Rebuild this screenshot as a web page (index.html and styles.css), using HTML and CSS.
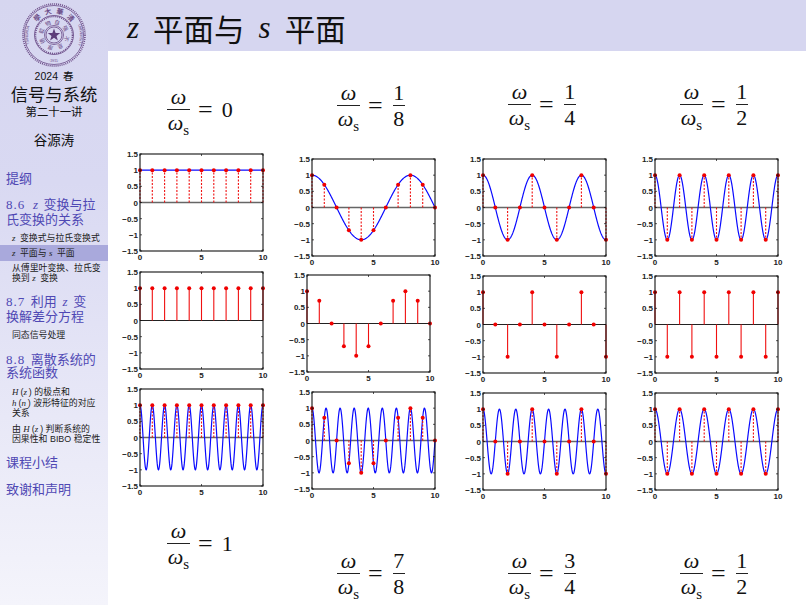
FILE: index.html
```html
<!DOCTYPE html>
<html lang="zh-CN">
<head>
  <meta charset="UTF-8" />
  <title>z 平面与 s 平面</title>
  <link rel="stylesheet" href="styles.css">
</head>
<body>
  <aside class="sidebar">
    <div class="brand">
      <svg class="logo" viewBox="0 0 64 64" width="64" height="64">
        <defs>
          <path id="ringTop" d="M10.5 32a21.5 21.5 0 0 1 43 0" />
          <path id="ringLeft" d="M13 53a28 28 0 0 1 0 -42" />
          <path id="ringRight" d="M51 11a28 28 0 0 1 0 42" />
          <path id="ringBottom" d="M20 56a27 27 0 0 0 24 0" />
          <path id="ringInner" d="M32 21a11 11 0 1 1 -0.01 0" />
        </defs>
        <circle class="logo-line dots" cx="32" cy="32" r="31" />
        <circle class="logo-line" cx="32" cy="32" r="29.5" />
        <circle class="logo-line" cx="32" cy="32" r="19.5" />
        <circle class="logo-line dots" cx="32" cy="32" r="18.5" />
        <circle class="logo-line" cx="32" cy="32" r="9.5" />
        <circle class="logo-line" cx="32" cy="32" r="8" />
        <text class="logo-big"><textPath href="#ringTop" startOffset="50%" text-anchor="middle" textLength="40">學大華清</textPath></text>
        <text class="logo-small"><textPath href="#ringLeft" startOffset="50%" text-anchor="middle" dominant-baseline="hanging">TSINGHUA</textPath></text>
        <text class="logo-small"><textPath href="#ringRight" startOffset="50%" text-anchor="middle" dominant-baseline="hanging">UNIVERSITY</textPath></text>
        <text class="logo-small"><textPath href="#ringBottom" startOffset="50%" text-anchor="middle">·1911·</textPath></text>
        <text class="logo-inner"><textPath href="#ringInner" textLength="66">自强不息厚德载物</textPath></text>
        <polygon class="logo-star" points="32,25.5 33.6,30 38.2,30 34.5,32.9 35.9,37.4 32,34.7 28.1,37.4 29.5,32.9 25.8,30 30.4,30" />
      </svg>
      <div class="term">2024 春</div>
      <div class="course">信号与系统</div>
      <div class="lecture">第二十一讲</div>
      <div class="teacher">谷源涛</div>
    </div>

    <nav class="nav">
      <a class="sec sec-outline">提纲</a>

      <a class="sec"><span class="no">8.6</span> <i>z</i> 变换与拉<br>氏变换的关系</a>
      <a class="sub sub-first"><i>z</i> 变换式与拉氏变换式</a>
      <a class="sub active"><i>z</i> 平面与 <i>s</i> 平面</a>
      <a class="sub">从傅里叶变换、拉氏变<br>换到 <i>z</i> 变换</a>

      <a class="sec sec-wide"><span class="no">8.7</span> 利用 <i>z</i> 变<br>换解差分方程</a>
      <a class="sub sub-first">同态信号处理</a>

      <a class="sec sec-tight"><span class="no">8.8</span> 离散系统的<br>系统函数</a>
      <a class="sub sub-top"><i>H</i>(<i>z</i>) 的极点和<br><i>h</i>(<i>n</i>) 波形特征的对应<br>关系</a>
      <a class="sub sub-gap">由 <i>H</i>(<i>z</i>) 判断系统的<br>因果性和 BIBO 稳定性</a>

      <a class="sec sec-end">课程小结</a>
      <a class="sec sec-end sec-last">致谢和声明</a>
    </nav>
  </aside>

  <main class="slide">
    <header class="title">
      <i>z</i><span>平面与</span><i>s</i><span>平面</span>
    </header>

    <div class="formulas formulas-top">
      <div class="formula shift-5">
        <div class="frac"><div class="num"><i>ω</i></div><div class="den"><i>ω</i><sub>s</sub></div></div>
        <span class="eq">=</span><span class="val">0</span>
      </div>
      <div class="formula shift-1">
        <div class="frac"><div class="num"><i>ω</i></div><div class="den"><i>ω</i><sub>s</sub></div></div>
        <span class="eq">=</span>
        <div class="frac frac-num"><div class="num">1</div><div class="den">8</div></div>
      </div>
      <div class="formula">
        <div class="frac"><div class="num"><i>ω</i></div><div class="den"><i>ω</i><sub>s</sub></div></div>
        <span class="eq">=</span>
        <div class="frac frac-num"><div class="num">1</div><div class="den">4</div></div>
      </div>
      <div class="formula">
        <div class="frac"><div class="num"><i>ω</i></div><div class="den"><i>ω</i><sub>s</sub></div></div>
        <span class="eq">=</span>
        <div class="frac frac-num"><div class="num">1</div><div class="den">2</div></div>
      </div>
    </div>

    <svg id="plots" class="plots" viewBox="108 145 698 355" width="698" height="355"></svg>

    <div class="formulas formulas-bottom">
      <div class="formula">
        <div class="frac"><div class="num"><i>ω</i></div><div class="den"><i>ω</i><sub>s</sub></div></div>
        <span class="eq">=</span><span class="val">1</span>
      </div>
      <div class="formula shift-30">
        <div class="frac"><div class="num"><i>ω</i></div><div class="den"><i>ω</i><sub>s</sub></div></div>
        <span class="eq">=</span>
        <div class="frac frac-num"><div class="num">7</div><div class="den">8</div></div>
      </div>
      <div class="formula shift-30">
        <div class="frac"><div class="num"><i>ω</i></div><div class="den"><i>ω</i><sub>s</sub></div></div>
        <span class="eq">=</span>
        <div class="frac frac-num"><div class="num">3</div><div class="den">4</div></div>
      </div>
      <div class="formula shift-30">
        <div class="frac"><div class="num"><i>ω</i></div><div class="den"><i>ω</i><sub>s</sub></div></div>
        <span class="eq">=</span>
        <div class="frac frac-num"><div class="num">1</div><div class="den">2</div></div>
      </div>
    </div>
  </main>

  <script src="script.js"></script>
</body>
</html>
```

FILE: styles.css
```css
body {
  margin: 0;
  width: 806px;
  height: 605px;
  overflow: hidden;
  display: flex;
  background: #fff;
  font-family: "Liberation Sans", "Noto Sans CJK SC", sans-serif;
}
.sidebar {
  width: 108px;
  flex: none;
  background: linear-gradient(#d6d6f0, #d9d9f2 30%, #f4f4fb);
}
.brand {
  display: flex;
  flex-direction: column;
  align-items: center;
  color: #111;
}
.logo {
  display: block;
  margin-top: 3px;
}
.logo-line {
  fill: none;
  stroke: #6a4a86;
  stroke-width: 0.8;
}
.logo-line.dots {
  stroke-width: 1.6;
  stroke-dasharray: 1 1;
}
.logo-big {
  font-size: 7px;
  font-weight: bold;
  fill: #6a4a86;
}
.logo-small {
  font-size: 3.8px;
  fill: #6a4a86;
}
.logo-inner {
  font-size: 5.5px;
  fill: #6a4a86;
}
.logo-star {
  fill: #5c3d7a;
}
.term {
  font-size: 10.5px;
  line-height: 12px;
  margin-top: 3px;
  word-spacing: 2px;
}
.course {
  font-size: 17.3px;
  line-height: 18px;
  margin-top: 4px;
}
.lecture {
  font-size: 11.4px;
  line-height: 12px;
  margin-top: 2px;
}
.teacher {
  font-size: 13.5px;
  line-height: 16px;
  margin-top: 15px;
}
.nav {
  margin-top: 22px;
}
.nav i {
  font-family: "Liberation Serif", serif;
}
.sec {
  display: block;
  padding-left: 6px;
  margin-top: 9px;
  font-size: 13px;
  line-height: 15.5px;
  color: #4f48b4;
  white-space: nowrap;
}
.sec i {
  margin: 0 2px;
}
.no {
  font-family: "Liberation Serif", serif;
  letter-spacing: 1px;
  margin-right: 2px;
}
.sec-outline {
  margin-top: 0;
  padding-bottom: 1px;
}
.sec-wide {
  margin-top: 10px;
}
.sec-tight {
  margin-top: 12px;
  line-height: 13.5px;
}
.sec-end {
  margin-top: 10px;
}
.sec-last {
  margin-top: 12px;
}
.sub {
  display: block;
  padding-left: 12px;
  font-size: 8.9px;
  line-height: 10.5px;
  color: #222;
  white-space: nowrap;
}
.sub i {
  margin-right: 2px;
}
.sub-top {
  margin-top: 7.5px;
}
.sub-first {
  margin-top: 5.5px;
}
.sub-gap {
  margin-top: 5px;
}
.active {
  background: #a9a9dc;
  line-height: 16px;
  margin: 1px 0 2px;
}
.slide {
  flex: 1;
  min-width: 0;
}
.title {
  height: 51px;
  box-sizing: border-box;
  background: #d6d6f0;
  padding: 5px 0 0 19px;
  display: flex;
  align-items: center;
  gap: 14px;
  font-family: "Noto Sans CJK SC", sans-serif;
  font-size: 30.5px;
  color: #111;
}
.title i {
  font-family: "Liberation Serif", serif;
  font-size: 31px;
}
.formulas {
  display: grid;
  grid-template-columns: 170px 171px 172px 1fr;
  align-items: start;
  padding-left: 59px;
}
.formulas-top {
  height: 94px;
  box-sizing: border-box;
  padding-top: 29px;
}
.formulas-bottom {
  padding-top: 19px;
}
.formula {
  display: flex;
  align-items: center;
  gap: 8px;
  font-family: "Liberation Serif", serif;
  font-size: 22px;
  color: #111;
}
.shift-1 {
  margin-top: 1px;
}
.shift-5 {
  margin-top: 5px;
}
.shift-30 {
  margin-top: 30px;
}
.frac {
  display: flex;
  flex-direction: column;
  align-items: center;
  width: 23px;
}
.frac-num {
  width: 12px;
  margin-left: 2px;
}
.num {
  height: 24px;
  line-height: 24px;
  width: 100%;
  text-align: center;
  border-bottom: 1px solid #222;
}
.den {
  height: 24px;
  line-height: 26px;
  white-space: nowrap;
}
.den sub {
  font-size: 15px;
  line-height: 0;
}
.eq {
  font-size: 26px;
}
.val {
  margin-left: 1px;
}
.plots {
  display: block;
}
.tick-label {
  font-family: "Liberation Sans", sans-serif;
  font-size: 8px;
  font-weight: bold;
  fill: #222;
}
```

FILE: script.js
```js
// axes frames are in page pixels, the svg viewBox starts at the main area
const plots = [
  { x: 140, y: 154, r: 0, kind: "dash" },
  { x: 312, y: 159, r: 1 / 8, kind: "dash" },
  { x: 483, y: 159, r: 1 / 4, kind: "dash" },
  { x: 655, y: 159, r: 1 / 2, kind: "dash" },
  { x: 140, y: 272, r: 0, kind: "stem" },
  { x: 307, y: 275, r: 1 / 8, kind: "stem" },
  { x: 483, y: 276, r: 1 / 4, kind: "stem" },
  { x: 655, y: 276, r: 1 / 2, kind: "stem" },
  { x: 140, y: 389, r: 1, kind: "dash" },
  { x: 312, y: 392, r: 7 / 8, kind: "dash" },
  { x: 483, y: 393, r: 3 / 4, kind: "dash" },
  { x: 655, y: 393, r: 1 / 2, kind: "dash" }
];

const W = 123;
const H = 97;

function drawPlot(p) {
  const sx = (t) => p.x + (t / 10) * W;
  const sy = (v) => p.y + ((1.5 - v) / 3) * H;
  let out = "";

  // zero line
  const zero = p.kind === "dash" ? 'stroke="#666" stroke-width="1.4"' : 'stroke="#222" stroke-width="1"';
  out += `<line x1="${p.x}" x2="${p.x + W}" y1="${sy(0)}" y2="${sy(0)}" ${zero}/>`;

  // continuous curve
  if (p.kind === "dash") {
    let d = "";
    for (let i = 0; i <= 400; i++) {
      const t = i / 40;
      d += `${i ? "L" : "M"}${sx(t).toFixed(2)} ${sy(Math.cos(2 * Math.PI * p.r * t)).toFixed(2)}`;
    }
    out += `<path d="${d}" fill="none" stroke="#0a0aff" stroke-width="1.2"/>`;
  }

  // samples
  for (let n = 0; n <= 10; n++) {
    const v = Math.round(Math.cos(2 * Math.PI * p.r * n) * 1e6) / 1e6;
    const dash = p.kind === "dash" ? 'stroke-dasharray="2 1.5"' : "";
    out += `<line x1="${sx(n)}" x2="${sx(n)}" y1="${sy(0)}" y2="${sy(v)}" stroke="#f01010" stroke-width="1.1" ${dash}/>`;
    out += `<circle cx="${sx(n)}" cy="${sy(v)}" r="2" fill="#f00000"/>`;
  }

  // frame and ticks
  out += `<rect x="${p.x}" y="${p.y}" width="${W}" height="${H}" fill="none" stroke="#111" stroke-width="1.1"/>`;
  [1.5, 1, 0.5, 0, -0.5, -1, -1.5].forEach((v) => {
    out += `<path d="M${p.x} ${sy(v)}h2M${p.x + W} ${sy(v)}h-2" stroke="#111" stroke-width="0.7"/>`;
    const label = String(v).replace("-", "\u2212");
    out += `<text class="tick-label" x="${p.x - 2}" y="${sy(v) + 3}" text-anchor="end">${label}</text>`;
  });
  [0, 5, 10].forEach((t) => {
    out += `<path d="M${sx(t)} ${p.y}v2M${sx(t)} ${p.y + H}v-2" stroke="#111" stroke-width="0.7"/>`;
    out += `<text class="tick-label" x="${sx(t)}" y="${p.y + H + 9}" text-anchor="middle">${t}</text>`;
  });
  return out;
}

document.getElementById("plots").innerHTML = plots.map(drawPlot).join("");
```
